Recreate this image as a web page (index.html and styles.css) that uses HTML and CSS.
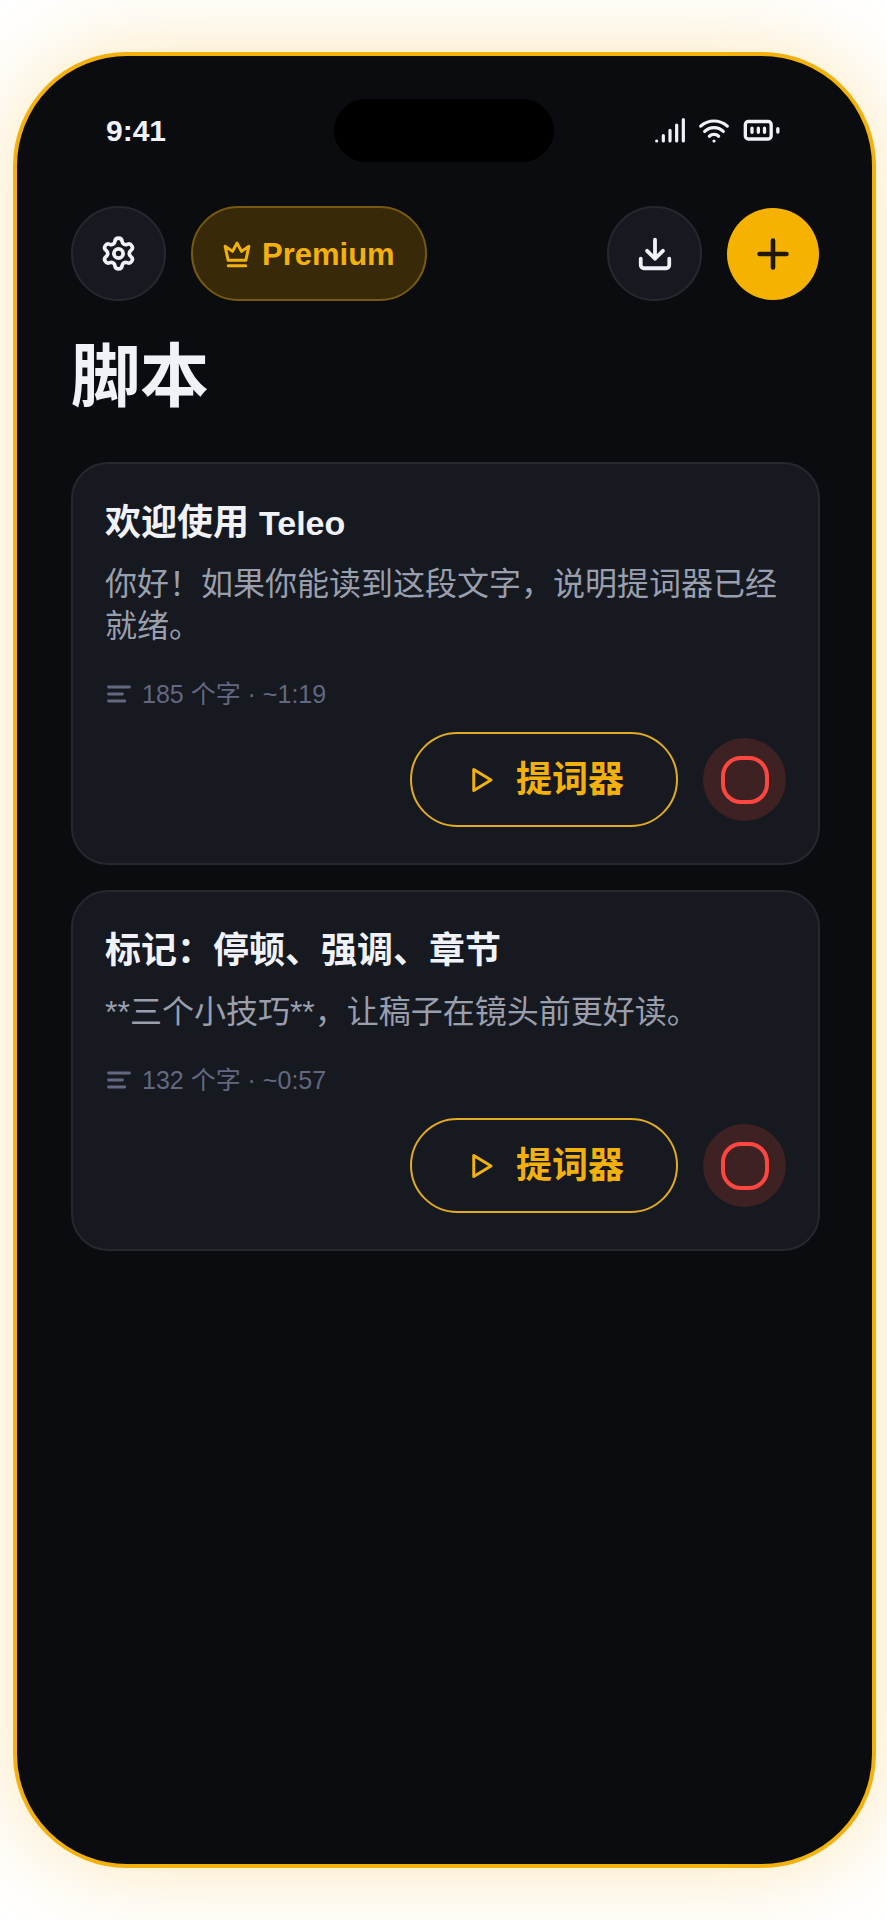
FILE: index.html
```
<!doctype html>
<html lang="zh-CN">
<head>
<meta charset="UTF-8">
<meta name="viewport" content="width=device-width, initial-scale=1">
<title>Teleo</title>
<link rel="stylesheet" href="styles.css">
</head>

<body>
<div class="phone">
   <div class="status-bar">
      <span class="time">9:41</span>
      <div class="island"></div>
      <div class="status-icons">
         <svg class="icon bold" width="32" height="32" viewBox="0 0 24 24"><path d="M2 19.5h.01M7 19.5v-4M12 19.5v-8M17 19.5v-12M22 3.5v16"/></svg>
         <svg class="icon bold" width="32" height="32" viewBox="0 0 24 24"><path d="M12 19.5h.01M2 8.32a15 15 0 0 1 20 0M5 12.36a10 10 0 0 1 14 0M8.5 15.93a5 5 0 0 1 7 0"/></svg>
         <svg class="icon" width="40" height="40" viewBox="0 0 24 24"><rect x="2" y="6.3" width="15.5" height="10.5" rx="1.8"/><path d="M6 10.3v2.5M9.8 10.3v2.5M13.5 10.3v2.5M21.5 10.6v2"/></svg>
      </div>
   </div>

   <div class="toolbar">
      <button class="round-btn" type="button" aria-label="设置">
         <svg class="icon bold" width="37" height="37" viewBox="0 0 24 24"><path d="M9.671 4.136a2.34 2.34 0 0 1 4.659 0 2.34 2.34 0 0 0 3.319 1.915 2.34 2.34 0 0 1 2.33 4.033 2.34 2.34 0 0 0 0 3.831 2.34 2.34 0 0 1-2.33 4.033 2.34 2.34 0 0 0-3.319 1.915 2.34 2.34 0 0 1-4.659 0 2.34 2.34 0 0 0-3.32-1.915 2.34 2.34 0 0 1-2.33-4.033 2.34 2.34 0 0 0 0-3.831A2.34 2.34 0 0 1 6.35 6.051a2.34 2.34 0 0 0 3.319-1.915"/><circle cx="12" cy="12" r="3"/></svg>
      </button>
      <button class="premium-btn" type="button">
         <svg class="icon bold" width="30" height="30" viewBox="0 0 24 24"><path d="M12 2.5l3.6 6.6 5.9-4.1-2.4 11.2H4.9L2.5 5l5.9 4.1zM5 20.5h14"/></svg>
         Premium
      </button>
      <div class="spacer"></div>
      <button class="round-btn" type="button" aria-label="导入">
         <svg class="icon bold" width="38" height="38" viewBox="0 0 24 24"><path d="M12 15V3M21 15v4a2 2 0 0 1-2 2H5a2 2 0 0 1-2-2v-4M7 10l5 5 5-5"/></svg>
      </button>
      <button class="add-btn" type="button" aria-label="新建">
         <svg class="icon bold" width="46" height="46" viewBox="0 0 24 24"><path d="M5 12h14M12 5v14"/></svg>
      </button>
   </div>

   <h1>脚本</h1>

   <div class="scripts">
      <div class="card">
         <h2>欢迎使用 <span class="latin">Teleo</span></h2>
         <p class="preview">你好！如果你能读到这段文字，说明提词器已经就绪。</p>
         <p class="meta">
            <svg class="icon bold" width="28" height="28" viewBox="0 0 24 24"><path d="M3 6h18M3 12h12M3 18h14"/></svg>
            185 个字 · ~1:19
         </p>
         <div class="actions">
            <button class="play-btn" type="button">
               <svg class="icon" width="36" height="36" viewBox="0 0 24 24"><path d="M6.5 5v14L18 12z"/></svg>
               提词器
            </button>
            <button class="record-btn" type="button" aria-label="录制"><span class="ring"></span></button>
         </div>
      </div>

      <div class="card">
         <h2>标记：停顿、强调、章节</h2>
         <p class="preview">**三个小技巧**，让稿子在镜头前更好读。</p>
         <p class="meta">
            <svg class="icon bold" width="28" height="28" viewBox="0 0 24 24"><path d="M3 6h18M3 12h12M3 18h14"/></svg>
            132 个字 · ~0:57
         </p>
         <div class="actions">
            <button class="play-btn" type="button">
               <svg class="icon" width="36" height="36" viewBox="0 0 24 24"><path d="M6.5 5v14L18 12z"/></svg>
               提词器
            </button>
            <button class="record-btn" type="button" aria-label="录制"><span class="ring"></span></button>
         </div>
      </div>
   </div>
</div>
</body>
</html>
```

FILE: styles.css
```
* {
   box-sizing: border-box;
}

body, h1, h2, p {
   margin: 0;
   padding: 0;
}

body {
   display: flex;
   min-height: 100vh;
   padding: 52px 11px 52px 13px;
   background: #fff;
   color: #f1f2f8;
   font-family: "Liberation Sans", "Noto Sans CJK SC", sans-serif;
}

button {
   display: flex;
   flex-shrink: 0;
   align-items: center;
   justify-content: center;
   margin: 0;
   padding: 0;
   border: 0;
   background: none;
   color: inherit;
   font-family: inherit;
   font-weight: 700;
   cursor: pointer;
}

.icon {
   flex-shrink: 0;
   fill: none;
   stroke: currentColor;
   stroke-width: 2;
   stroke-linecap: round;
   stroke-linejoin: round;
}

.icon.bold {
   stroke-width: 2.4;
}

.phone {
   flex: 1;
   min-width: 0;
   padding: 43px 52px 43px 54px;
   border: 4px solid #f2b10c;
   border-radius: 114px;
   background: #0a0c10;
   box-shadow: 0 0 90px rgba(242, 177, 30, .32);
}

/* status bar */
.status-bar {
   display: grid;
   grid-template-columns: 1fr 220px 1fr;
   align-items: center;
   padding: 0 38px 0 35px;
}

.time {
   font-size: 30px;
   font-weight: 700;
}

.island {
   height: 63px;
   border-radius: 32px;
   background: #000;
}

.status-icons {
   display: flex;
   align-items: center;
   justify-content: flex-end;
   gap: 12px;
}

/* toolbar */
.toolbar {
   display: flex;
   align-items: center;
   gap: 25px;
   margin-top: 44px;
   padding-right: 1px;
}

.spacer {
   flex: 1;
}

.round-btn {
   width: 95px;
   height: 95px;
   border: 2px solid #25292e;
   border-radius: 50%;
   background: #161920;
}

.premium-btn {
   gap: 10px;
   height: 95px;
   padding: 2px 30px 0 29px;
   border: 2px solid #77590f;
   border-radius: 48px;
   background: #382a09;
   color: #f2b10c;
   font-size: 31px;
}

.add-btn {
   width: 92px;
   height: 92px;
   border-radius: 50%;
   background: #f5b200;
   color: #1f1604;
}

h1 {
   margin: 36px 0 43px;
   font-size: 69px;
   line-height: 82px;
}

/* script cards */
.scripts {
   display: flex;
   flex-direction: column;
   gap: 25px;
}

.card {
   padding: 36px 32px;
   border: 2px solid #25292e;
   border-radius: 37px;
   background: #161920;
}

h2 {
   font-size: 36px;
   line-height: 46px;
}

.latin {
   font-size: 34px;
}

.preview {
   margin-top: 17px;
   color: #9a9fad;
   font-size: 32px;
   line-height: 42px;
}

.meta {
   display: flex;
   align-items: center;
   gap: 9px;
   margin-top: 32px;
   color: #626880;
   font-size: 25px;
   line-height: 30px;
}

.actions {
   display: flex;
   align-items: center;
   justify-content: flex-end;
   gap: 25px;
   margin-top: 23px;
}

.play-btn {
   gap: 16px;
   width: 268px;
   height: 95px;
   border: 2px solid #e3ab22;
   border-radius: 48px;
   color: #f2b10c;
   font-size: 36px;
   line-height: 36px;
}

.record-btn {
   width: 83px;
   height: 83px;
   border-radius: 50%;
   background: #3e2122;
}

.ring {
   width: 48px;
   height: 48px;
   border: 4px solid #fb4740;
   border-radius: 20px;
}
```
